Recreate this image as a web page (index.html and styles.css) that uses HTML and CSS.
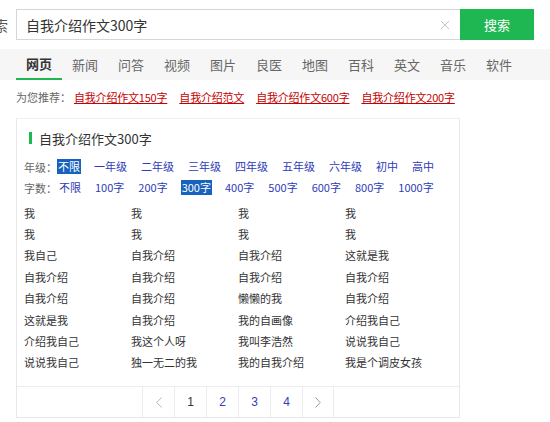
FILE: index.html
```html
<!DOCTYPE html>
<html lang="zh-CN">
<head>
<meta charset="utf-8">
<title>自我介绍作文300字</title>
<link rel="stylesheet" href="styles.css">
</head>
<body>
<div class="top">
  <div class="cut"><span>搜索</span></div>
  <div class="input">
    <span class="query">自我介绍作文300字</span>
    <svg class="clear" width="10" height="10" viewBox="0 0 10 10"><path d="M1 1L9 9M9 1L1 9" stroke="#c4c4c4" stroke-width="1" fill="none"/></svg>
  </div>
  <div class="btn">搜索</div>
</div>
<div class="nav">
  <span class="tab active">网页</span>
  <span class="tab">新闻</span>
  <span class="tab">问答</span>
  <span class="tab">视频</span>
  <span class="tab">图片</span>
  <span class="tab">良医</span>
  <span class="tab">地图</span>
  <span class="tab">百科</span>
  <span class="tab">英文</span>
  <span class="tab">音乐</span>
  <span class="tab">软件</span>
</div>
<div class="rec">
  <span class="rec-label">为您推荐：</span>
  <a class="rec-link">自我介绍作文150字</a>
  <a class="rec-link">自我介绍范文</a>
  <a class="rec-link">自我介绍作文600字</a>
  <a class="rec-link">自我介绍作文200字</a>
</div>
<div class="card">
  <div class="title"><i class="bar"></i>自我介绍作文300字</div>
  <div class="filter f1">
    <span class="flabel">年级：</span>
    <span class="opt on">不限</span>
    <span class="opt">一年级</span>
    <span class="opt">二年级</span>
    <span class="opt">三年级</span>
    <span class="opt">四年级</span>
    <span class="opt">五年级</span>
    <span class="opt">六年级</span>
    <span class="opt">初中</span>
    <span class="opt">高中</span>
  </div>
  <div class="filter f2">
    <span class="flabel">字数：</span>
    <span class="opt">不限</span>
    <span class="opt">100字</span>
    <span class="opt">200字</span>
    <span class="opt on">300字</span>
    <span class="opt">400字</span>
    <span class="opt">500字</span>
    <span class="opt">600字</span>
    <span class="opt">800字</span>
    <span class="opt">1000字</span>
  </div>
  <div class="grid">
    <span>我</span><span>我</span><span>我</span><span>我</span>
    <span>我</span><span>我</span><span>我</span><span>我</span>
    <span>我自己</span><span>自我介绍</span><span>自我介绍</span><span>这就是我</span>
    <span>自我介绍</span><span>自我介绍</span><span>自我介绍</span><span>自我介绍</span>
    <span>自我介绍</span><span>自我介绍</span><span>懒懒的我</span><span>自我介绍</span>
    <span>这就是我</span><span>自我介绍</span><span>我的自画像</span><span>介绍我自己</span>
    <span>介绍我自己</span><span>我这个人呀</span><span>我叫李浩然</span><span>说说我自己</span>
    <span>说说我自己</span><span>独一无二的我</span><span>我的自我介绍</span><span>我是个调皮女孩</span>
  </div>
  <div class="pager">
    <span class="pg arrow"><svg width="6" height="11" viewBox="0 0 6 11"><path d="M5.5 0.5L0.8 5.5L5.5 10.5" stroke="#b8b8b8" stroke-width="1" fill="none"/></svg></span>
    <span class="pg cur">1</span>
    <span class="pg">2</span>
    <span class="pg">3</span>
    <span class="pg">4</span>
    <span class="pg arrow last"><svg width="6" height="11" viewBox="0 0 6 11"><path d="M0.5 0.5L5.2 5.5L0.5 10.5" stroke="#999" stroke-width="1" fill="none"/></svg></span>
  </div>
</div>
</body>
</html>
```
FILE: styles.css
```css
* { box-sizing: border-box; }
body {
  margin: 0;
  font-family: "Noto Sans CJK SC", "Microsoft YaHei", sans-serif;
  color: #333;
  background: #fff;
  width: 550px;
  height: 422px;
  overflow: hidden;
}
.top {
  display: flex;
  align-items: center;
  padding-top: 9px;
  height: 40px;
}
.cut {
  width: 8px;
  margin-right: 8px;
  overflow: hidden;
  display: flex;
  justify-content: flex-end;
  font-size: 14px;
  color: #555;
  white-space: nowrap;
}
.input {
  width: 444px;
  height: 31px;
  border: 1px solid #d6d6d6;
  border-right: none;
  display: flex;
  align-items: center;
  padding-left: 9px;
  padding-right: 10px;
}
.query {
  font-size: 14px;
  color: #333;
  flex: 1;
}
.btn {
  width: 74px;
  height: 31px;
  background: #1fb752;
  color: #fff;
  font-size: 13px;
  display: flex;
  align-items: center;
  justify-content: center;
}
.nav {
  margin-top: 9px;
  height: 31px;
  background: #f6f6f6;
  display: flex;
  padding-left: 16px;
}
.tab {
  width: 46px;
  text-align: center;
  font-size: 13px;
  line-height: 31px;
  color: #666;
}
.tab.active {
  color: #333;
  font-weight: bold;
  border-bottom: 2px solid #1fb752;
  line-height: 29px;
}
.rec {
  display: flex;
  align-items: center;
  height: 33px;
  padding-left: 16px;
  font-size: 11px;
  white-space: nowrap;
}
.rec-label { color: #666; width: 58px; }
.rec-link {
  color: #c40000;
  text-decoration: underline;
  margin-right: 12px;
  letter-spacing: -0.2px;
}
.card {
  margin: 5px 0 0 16px;
  width: 444px;
  height: 300px;
  border: 1px solid #e8e8e8;
  border-top-color: #f0f0f0;
  padding-top: 11px;
}
.title {
  display: flex;
  align-items: center;
  height: 16px;
  padding-left: 12px;
  font-size: 13px;
  color: #333;
}
.bar {
  display: inline-block;
  width: 3px;
  height: 12px;
  background: #1fb752;
  margin-right: 7px;
}
.filter {
  display: flex;
  align-items: center;
  height: 15px;
  padding-left: 7px;
  font-size: 11px;
  white-space: nowrap;
}
.f1 { margin-top: 13px; }
.f2 { margin-top: 6px; }
.flabel { color: #666; width: 33px; flex-shrink: 0; }
.opt {
  flex-shrink: 0;
  color: #2e3cb8;
  padding: 0 1px;
  line-height: 15px;
  margin-right: 12px;
}
.f2 .flabel { width: 34px; }
.f2 .opt { margin-right: 12px; }
.f2 .opt:first-of-type { margin-right: 13px; }
.opt.on {
  background: #1662bd;
  color: #fff;
}
.grid {
  margin-top: 7px;
  padding-left: 7px;
  display: grid;
  grid-template-columns: 107px 107px 107px 107px;
  grid-auto-rows: 21.4px;
  font-size: 11px;
  color: #333;
  align-items: center;
  white-space: nowrap;
}
.pager {
  margin-top: 13px;
  border-top: 1px solid #ececec;
  height: 31px;
  display: flex;
  padding-left: 125px;
}
.pg {
  width: 32px;
  height: 30px;
  border-left: 1px solid #ececec;
  display: flex;
  align-items: center;
  justify-content: center;
  font-size: 12px;
  color: #3a3ab8;
  font-family: "Liberation Sans", Arial, sans-serif;
}
.pg.cur { color: #333; }
.pg.last { border-right: 1px solid #ececec; }
```
